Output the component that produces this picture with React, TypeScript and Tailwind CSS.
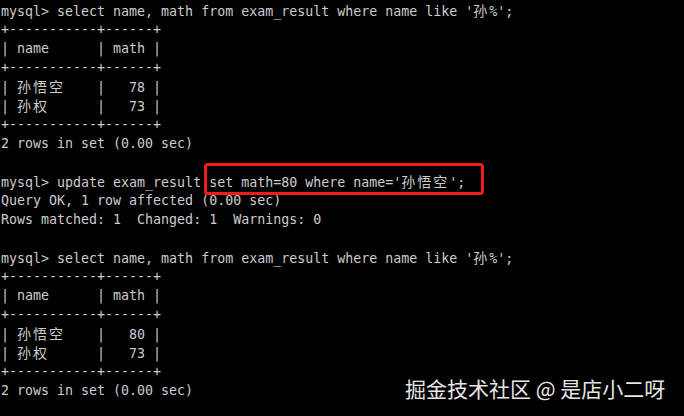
import React from "react";

const lines: string[] = [
  "mysql> select name, math from exam_result where name like '孙%';",
  "+-----------+------+",
  "| name      | math |",
  "+-----------+------+",
  "| 孙悟空    |   78 |",
  "| 孙权      |   73 |",
  "+-----------+------+",
  "2 rows in set (0.00 sec)",
  "",
  "mysql> update exam_result set math=80 where name='孙悟空';",
  "Query OK, 1 row affected (0.00 sec)",
  "Rows matched: 1  Changed: 1  Warnings: 0",
  "",
  "mysql> select name, math from exam_result where name like '孙%';",
  "+-----------+------+",
  "| name      | math |",
  "+-----------+------+",
  "| 孙悟空    |   80 |",
  "| 孙权      |   73 |",
  "+-----------+------+",
  "2 rows in set (0.00 sec)",
];

function renderLine(s: string) {
  const parts: React.ReactNode[] = [];
  let buf = "";
  let k = 0;
  for (const ch of s) {
    if (/[\u4e00-\u9fff]/.test(ch)) {
      if (buf) {
        parts.push(<span key={k++}>{buf}</span>);
        buf = "";
      }
      parts.push(
        <span
          key={k++}
          className="inline-block w-[16px] text-[14px] [font-family:'Noto_Sans_CJK_SC',sans-serif]"
        >
          {ch}
        </span>
      );
    } else {
      buf += ch;
    }
  }
  if (buf) parts.push(<span key={k++}>{buf}</span>);
  return parts;
}

export default function App() {
  return (
    <div className="relative w-[684px] h-[416px] bg-black overflow-hidden">
      <div className="pl-[1px] pt-[1px] text-[#cccccc] text-[13.3px] [font-family:'DejaVu_Sans_Mono','Noto_Sans_CJK_SC',monospace] whitespace-pre">
        {lines.map((l, i) => (
          <div key={i} className="h-[19px] leading-[19px]">
            {renderLine(l)}
          </div>
        ))}
      </div>
      <div className="absolute left-[204px] top-[163px] w-[280px] h-[32px] border-[3px] border-[#f01c1c] rounded-[4px]" />
      <div className="absolute left-[405px] top-[375px] text-[21px] leading-[26px] text-[#e6e6e6] [font-family:'Noto_Sans_CJK_SC',sans-serif] whitespace-pre">
        掘金技术社区 @ 是店小二呀
      </div>
    </div>
  );
}
